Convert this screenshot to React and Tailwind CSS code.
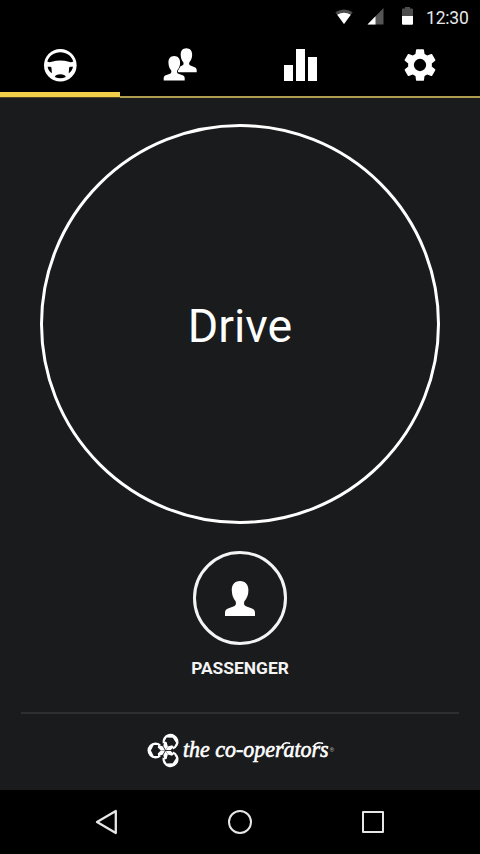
const personPath =
  "M15 0C9.5 0 6.6 4 6.8 9.5C6.9 14 8.2 17.5 10.6 20.2C11.4 22.6 11 24.2 9 25.2L3 27.6C.8 28.6 0 30 0 32V35H30V32C30 30 29.2 28.6 27 27.6L21 25.2C19 24.2 18.6 22.6 19.4 20.2C21.8 17.5 23.4 14 23.4 9.5C23.6 4 20.5 0 15 0Z";

function StatusBar() {
  return (
    <div className="flex h-9 items-center justify-end pr-[11px] text-white">
      <svg className="mr-[13px] mb-[3px] h-5 w-5" viewBox="0 0 20 20">
        <path d="M1.3 5.2Q10 -.2 18.7 5.2L10 17Z" fill="#4d4d4d" />
        <path d="M3.2 7.7Q10 4 16.8 7.7L10 17Z" fill="#fff" />
      </svg>
      <svg className="mr-[17px] mb-[3px] h-5 w-[17px]" viewBox="0 0 17 20">
        <path d="M16.5 1V17.5H.5Z" fill="#555" />
        <path d="M8.5 9.3V17.5H.5Z" fill="#fff" />
      </svg>
      <svg className="mr-3 mb-[3px] h-5 w-[13px]" viewBox="0 0 13 20">
        <path d="M4 0H9V1.5H11Q12 1.5 12 2.7V10H1V2.7Q1 1.5 2 1.5H4Z" fill="#4d4d4d" />
        <path d="M1 9H12V16.5Q12 17.7 11 17.7H2Q1 17.7 1 16.5Z" fill="#fff" />
      </svg>
      <span className="w-[43px] text-[17.5px] leading-9 tracking-[-0.2px] text-[#e8e8e8]">12:30</span>
    </div>
  );
}

function WheelIcon() {
  return (
    <svg className="h-[34px] w-[34px]" viewBox="0 0 34 34">
      <circle cx="17.3" cy="17.3" r="16.3" fill="#fff" />
      <path d="M4.3 13.6C6.1 7.9 11.1 4.3 17.3 4.3S28.5 7.9 30.3 13.6Q28.2 14.8 25.8 13.8Q21.5 12.6 17.3 12.6T8.8 13.8Q6.4 14.8 4.3 13.6Z" fill="#000" />
      <path d="M4.6 18.7H7.1Q8.4 18.7 8.5 20L8.9 25.3Q5.3 22.9 4.6 18.7ZM30 18.7H27.5Q26.2 18.7 26.1 20L25.7 25.3Q29.3 22.9 30 18.7Z" fill="#000" />
      <path d="M11.8 29Q12.6 26.2 17.3 26.2Q22 26.2 22.8 29Q17.3 31.6 11.8 29Z" fill="#000" />
    </svg>
  );
}

function PeopleIcon() {
  return (
    <svg className="h-[34px] w-[34px]" viewBox="0 0 34 34">
      <g fill="#fff">
        <path d={personPath} transform="translate(13 .2) scale(.69)" />
        <path d={personPath} transform="translate(.7 8) scale(.7)" stroke="#000" strokeWidth="2.4" />
        <path d={personPath} transform="translate(.7 8) scale(.7)" />
      </g>
    </svg>
  );
}

function GearIcon() {
  return (
    <svg className="h-[38px] w-[38px]" viewBox="0 0 24 24" fill="#fff">
      <path d="M19.43 12.98c.04-.32.07-.64.07-.98s-.03-.66-.07-.98l2.11-1.65c.19-.15.24-.42.12-.64l-2-3.46c-.12-.22-.39-.3-.61-.22l-2.49 1c-.52-.4-1.08-.73-1.69-.98l-.38-2.65C14.46 2.18 14.25 2 14 2h-4c-.25 0-.46.18-.49.42l-.38 2.65c-.61.25-1.17.59-1.69.98l-2.49-1c-.23-.09-.49 0-.61.22l-2 3.46c-.13.22-.07.49.12.64l2.11 1.65c-.04.32-.07.65-.07.98s.03.66.07.98l-2.11 1.65c-.19.15-.24.42-.12.64l2 3.46c.12.22.39.3.61.22l2.49-1c.52.4 1.08.73 1.69.98l.38 2.65c.03.24.24.42.49.42h4c.25 0 .46-.18.49-.42l.38-2.65c.61-.25 1.17-.59 1.69-.98l2.49 1c.23.09.49 0 .61-.22l2-3.46c.12-.22.07-.49-.12-.64l-2.11-1.65zM12 15.9a3.9 3.9 0 1 1 0-7.8 3.9 3.9 0 0 1 0 7.8z" />
    </svg>
  );
}

function Tabs() {
  return (
    <div>
      <div className="grid h-14 grid-cols-4 place-items-center pt-px">
        <WheelIcon />
        <PeopleIcon />
        <div className="flex h-[34px] items-end gap-[3px] pb-px">
          <div className="h-4 w-[9px] bg-white" />
          <div className="h-8 w-[9px] bg-white" />
          <div className="h-6 w-[9px] bg-white" />
        </div>
        <GearIcon />
      </div>
      <div className="flex h-[6px] items-end">
        <div className="h-full w-[120px]">
          <div className="h-[5px] bg-[#f2cf49]" />
          <div className="h-px bg-[#4a431f]" />
        </div>
        <div className="h-[2px] flex-1 bg-[#b09c4e]" />
      </div>
    </div>
  );
}

const lobe =
  "M-4.7 -6A8 8 0 1 0 -4.7 6L-6.2 4.8L-7.6 5.5H-11.8L-14.6 0L-11.8 -5.5H-7.6L-6.2 -4.8Z";
const petal = "M-.3 0L-4 -2.3L-9.2 -1.2L-8.2 1.2L-4 2.3Z";
const mirroredPetal = "M-.3 0L-4 2.3L-9.2 1.2L-8.2 -1.2L-4 -2.3Z";

function Logo() {
  return (
    <svg className="h-10 w-[190px]" viewBox="0 0 190 40">
      <g transform="translate(20.5 19.5)" fill="#fff">
        {[0, 120, 240].map((angle) => (
          <g key={angle} transform={`rotate(${angle})`}>
            <path d={lobe} />
            <path d={petal} transform="rotate(30)" />
            <path d={mirroredPetal} transform="rotate(-30)" />
          </g>
        ))}
        <path d="M0 0H9M0 0L-4.5 -7.8M0 0L-4.5 7.8" stroke="#1a1b1d" strokeWidth=".8" />
      </g>
      <text
        x="38"
        y="25.5"
        textLength="145.5"
        lengthAdjust="spacingAndGlyphs"
        className="fill-white stroke-white stroke-[0.6px] font-['Liberation_Serif',serif] text-[22.5px] italic"
      >
        the co-operators
      </text>
      <path d="M137 15Q139.5 10.6 144.5 12.3M169 15Q171.5 10.6 177.5 12.3" fill="none" stroke="#fff" strokeWidth="1.5" strokeLinecap="round" />
      <text x="184.5" y="20.5" className="fill-[#aaa] font-['Roboto',sans-serif] text-[6px]">®</text>
    </svg>
  );
}

export default function App() {
  return (
    <div className="flex h-[854px] w-[480px] flex-col overflow-hidden bg-[#1a1b1d] font-['Roboto',sans-serif]">
      <header className="h-[98px] bg-black">
        <StatusBar />
        <Tabs />
      </header>
      <main className="flex flex-1 flex-col items-center pt-[26px]">
        <button className="flex h-[400px] w-[400px] items-center justify-center rounded-full border-[3px] border-white text-[46.5px] leading-none text-white">
          <span className="pt-[5px]">Drive</span>
        </button>
        <button className="mt-[27px] flex h-[94px] w-[94px] items-center justify-center rounded-full border-[3px] border-[#f4f4f4]">
          <svg className="h-[35px] w-[30px]" viewBox="0 0 30 35" fill="#fff">
            <path d={personPath} />
          </svg>
        </button>
        <div className="mt-[11px] h-6 text-[17.4px] leading-6 font-bold text-[#f4f4f4]">PASSENGER</div>
        <div className="mt-8 h-[2px] w-[438px] bg-[#2e2f31]" />
        <div className="mt-[17px] flex">
          <Logo />
        </div>
      </main>
      <nav className="flex h-16 items-center justify-between bg-black pr-24 pl-[94px]">
        <svg className="h-[26px] w-6" viewBox="0 0 24 26" fill="none" stroke="#e6e6e6" strokeWidth="2.3" strokeLinejoin="round">
          <path d="M21.8 2V24L3 13Z" />
        </svg>
        <div className="h-6 w-6 rounded-full border-2 border-[#e6e6e6]" />
        <div className="h-[22px] w-[22px] rounded-[1px] border-2 border-[#e6e6e6]" />
      </nav>
    </div>
  );
}
